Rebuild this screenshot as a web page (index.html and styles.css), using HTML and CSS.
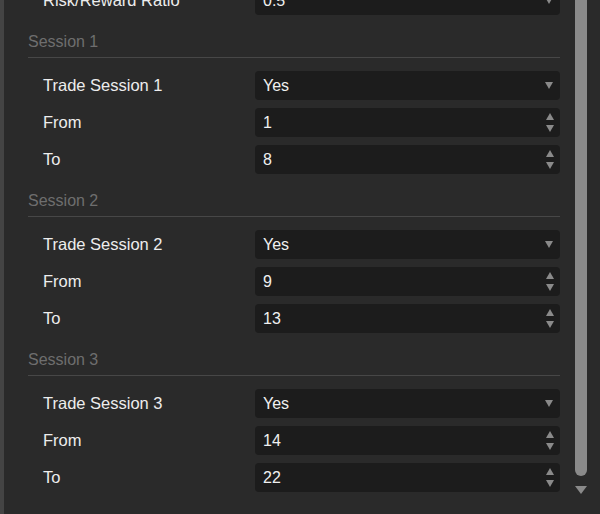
FILE: index.html
```html
<!DOCTYPE html>
<html>
<head>
<meta charset="utf-8">
<link rel="stylesheet" href="styles.css">
</head>
<body>
<div class="window">
  <div class="panel">
    <div class="content">
      <div class="row">
        <div class="label">Risk/Reward Ratio</div>
        <div class="field select"><span class="value">0.5</span>
          <svg class="caret" width="8" height="7" viewBox="0 0 8 7"><path d="M0 0H8L4 7Z"/></svg></div>
      </div>

      <div class="section">Session 1</div>
      <div class="rows">
        <div class="row">
          <div class="label">Trade Session 1</div>
          <div class="field select"><span class="value">Yes</span>
            <svg class="caret" width="8" height="7" viewBox="0 0 8 7"><path d="M0 0H8L4 7Z"/></svg></div>
        </div>
        <div class="row">
          <div class="label">From</div>
          <div class="field"><span class="value">1</span>
            <span class="spin"><svg width="8" height="7" viewBox="0 0 8 7"><path d="M0 7H8L4 0Z"/></svg><svg width="8" height="7" viewBox="0 0 8 7"><path d="M0 0H8L4 7Z"/></svg></span></div>
        </div>
        <div class="row">
          <div class="label">To</div>
          <div class="field"><span class="value">8</span>
            <span class="spin"><svg width="8" height="7" viewBox="0 0 8 7"><path d="M0 7H8L4 0Z"/></svg><svg width="8" height="7" viewBox="0 0 8 7"><path d="M0 0H8L4 7Z"/></svg></span></div>
        </div>
      </div>

      <div class="section">Session 2</div>
      <div class="rows">
        <div class="row">
          <div class="label">Trade Session 2</div>
          <div class="field select"><span class="value">Yes</span>
            <svg class="caret" width="8" height="7" viewBox="0 0 8 7"><path d="M0 0H8L4 7Z"/></svg></div>
        </div>
        <div class="row">
          <div class="label">From</div>
          <div class="field"><span class="value">9</span>
            <span class="spin"><svg width="8" height="7" viewBox="0 0 8 7"><path d="M0 7H8L4 0Z"/></svg><svg width="8" height="7" viewBox="0 0 8 7"><path d="M0 0H8L4 7Z"/></svg></span></div>
        </div>
        <div class="row">
          <div class="label">To</div>
          <div class="field"><span class="value">13</span>
            <span class="spin"><svg width="8" height="7" viewBox="0 0 8 7"><path d="M0 7H8L4 0Z"/></svg><svg width="8" height="7" viewBox="0 0 8 7"><path d="M0 0H8L4 7Z"/></svg></span></div>
        </div>
      </div>

      <div class="section">Session 3</div>
      <div class="rows">
        <div class="row">
          <div class="label">Trade Session 3</div>
          <div class="field select"><span class="value">Yes</span>
            <svg class="caret" width="8" height="7" viewBox="0 0 8 7"><path d="M0 0H8L4 7Z"/></svg></div>
        </div>
        <div class="row">
          <div class="label">From</div>
          <div class="field"><span class="value">14</span>
            <span class="spin"><svg width="8" height="7" viewBox="0 0 8 7"><path d="M0 7H8L4 0Z"/></svg><svg width="8" height="7" viewBox="0 0 8 7"><path d="M0 0H8L4 7Z"/></svg></span></div>
        </div>
        <div class="row">
          <div class="label">To</div>
          <div class="field"><span class="value">22</span>
            <span class="spin"><svg width="8" height="7" viewBox="0 0 8 7"><path d="M0 7H8L4 0Z"/></svg><svg width="8" height="7" viewBox="0 0 8 7"><path d="M0 0H8L4 7Z"/></svg></span></div>
        </div>
      </div>
    </div>
  </div>
  <div class="scrollbar">
    <div class="thumb"></div>
    <svg class="arrow" width="12" height="8" viewBox="0 0 12 8"><path d="M0 0H12L6 8Z"/></svg>
  </div>
</div>
</body>
</html>
```

FILE: styles.css
```css
html, body {
  margin: 0;
  padding: 0;
  background: #2a2a2a;
  height: 514px;
  overflow: hidden;
}

.window {
  display: flex;
  height: 514px;
  font-family: "Liberation Sans", Arial, sans-serif;
}

.panel {
  flex: 1;
  border-left: 4px solid #444444;
  padding: 0 10px 0 24px;
  overflow: hidden;
}

.content {
  margin-top: -14px;
}

.rows {
  display: flex;
  flex-direction: column;
  gap: 8px;
  margin-top: 13px;
}

.row {
  display: grid;
  grid-template-columns: 227px 1fr;
  align-items: center;
  height: 29px;
}

.label {
  padding-left: 15px;
  font-size: 16.5px;
  color: #ededed;
  white-space: nowrap;
}

.field {
  height: 29px;
  background: #1c1c1c;
  border-radius: 4px;
  display: flex;
  align-items: center;
  justify-content: space-between;
  padding: 0 6px 0 8px;
  box-sizing: border-box;
}

.value {
  font-size: 16px;
  color: #f0f0f0;
}

.caret {
  fill: #8a8a8a;
  margin-right: 1px;
}

.spin {
  display: flex;
  flex-direction: column;
  gap: 5px;
  fill: #8a8a8a;
}

.spin svg {
  display: block;
}

.section {
  margin-top: 18px;
  line-height: 18px;
  padding-bottom: 6px;
  border-bottom: 1px solid #474747;
  font-size: 16px;
  color: #6e6e6e;
}

.scrollbar {
  width: 30px;
  display: flex;
  flex-direction: column;
  align-items: flex-start;
  padding-left: 5px;
  box-sizing: border-box;
}

.thumb {
  width: 12px;
  height: 476px;
  background: #8a8a8a;
  border-radius: 0 0 6px 6px;
}

.arrow {
  margin-top: 10px;
  fill: #8a8a8a;
}
```
